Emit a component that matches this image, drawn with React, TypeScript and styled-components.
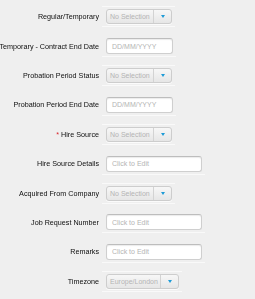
import * as React from "react";
import styled, { createGlobalStyle, css } from "styled-components";

const GlobalStyle = createGlobalStyle`
  html, body {
    margin: 0;
    padding: 0;
    background: #efefef;
    overflow: hidden;
  }
  body {
    font-family: "Liberation Sans", Arial, sans-serif;
    -webkit-font-smoothing: antialiased;
  }
`;

type FieldKind = "select" | "date" | "text";

interface FieldDef {
  label: string;
  kind: FieldKind;
  value?: string;
  required?: boolean;
  width?: number;
}

const fields: FieldDef[] = [
  { label: "Regular/Temporary", kind: "select", value: "No Selection" },
  { label: "If Temporary - Contract End Date", kind: "date", value: "DD/MM/YYYY" },
  { label: "Probation Period Status", kind: "select", value: "No Selection" },
  { label: "Probation Period End Date", kind: "date", value: "DD/MM/YYYY" },
  { label: "Hire Source", kind: "select", value: "No Selection", required: true },
  { label: "Hire Source Details", kind: "text", value: "Click to Edit" },
  { label: "Acquired From Company", kind: "select", value: "No Selection" },
  { label: "Job Request Number", kind: "text", value: "Click to Edit" },
  { label: "Remarks", kind: "text", value: "Click to Edit" },
  { label: "Timezone", kind: "select", value: "Europe/London", width: 54 },
];

const Form = styled.div`
  display: flex;
  flex-direction: column;
  padding-top: 2px;
`;

const Row = styled.div`
  display: flex;
  align-items: center;
  height: 29.4px;
`;

const Label = styled.div`
  width: 99px;
  flex: none;
  display: flex;
  justify-content: flex-end;
  white-space: nowrap;
  font-size: 7.2px;
  line-height: 9px;
  color: #0d0d0d;
  margin-right: 3px;
  transform: translateZ(0);
`;

const Star = styled.span`
  color: #d9232b;
  margin-right: 2px;
`;

const Cell = styled.div<{ $topLine?: boolean }>`
  display: flex;
  padding: 2px 3px 2px 4px;
  border-bottom: 1px solid #f9f9f9;
  border-top: 1px solid ${(p) => (p.$topLine ? "#f9f9f9" : "transparent")};
`;

const boxBase = css`
  box-sizing: border-box;
  border: 1px solid #cdcdcd;
  border-radius: 3px;
  font-size: 7px;
  color: #b4b4b4;
  display: flex;
  align-items: center;
`;

const SelectBox = styled.div`
  ${boxBase};
  height: 15px;
  background: linear-gradient(#f7f7f7, #e6e6e6);
  box-shadow: 0 1px 0 #fbfbfb;
`;

const SelectValue = styled.div<{ $w: number }>`
  width: ${(p) => p.$w}px;
  padding-left: 3px;
  box-sizing: border-box;
  white-space: nowrap;
  overflow: hidden;
  border-right: 1px solid #d3d3d3;
  height: 100%;
  display: flex;
  align-items: center;
`;

const ArrowWrap = styled.div`
  width: 16px;
  display: flex;
  align-items: center;
  justify-content: center;
  padding-left: 1px;
`;

const Arrow = styled.div`
  width: 0;
  height: 0;
  border-left: 2.5px solid transparent;
  border-right: 2.5px solid transparent;
  border-top: 3px solid #1e9bd7;
`;

const InputBox = styled.div<{ $w: number }>`
  ${boxBase};
  width: ${(p) => p.$w}px;
  height: 16px;
  background: #fff;
  padding-left: 5px;
  border-color: #cfcfcf;
  border-top-color: #bdbdbd;
  box-shadow: inset 0 1px 1px rgba(0, 0, 0, 0.08);
`;

const Field = ({ f }: { f: FieldDef }) => {
  if (f.kind === "select") {
    return (
      <Cell $topLine>
        <SelectBox>
          <SelectValue $w={f.width ?? 47}>{f.value}</SelectValue>
          <ArrowWrap>
            <Arrow />
          </ArrowWrap>
        </SelectBox>
      </Cell>
    );
  }
  return (
    <Cell>
      <InputBox $w={f.kind === "date" ? 67 : 96}>{f.value}</InputBox>
    </Cell>
  );
};

export default function App() {
  return (
    <>
      <GlobalStyle />
      <Form>
        {fields.map((f) => (
          <Row key={f.label}>
            <Label>
              {f.required && <Star>*</Star>}
              {f.label}
            </Label>
            <Field f={f} />
          </Row>
        ))}
      </Form>
    </>
  );
}
